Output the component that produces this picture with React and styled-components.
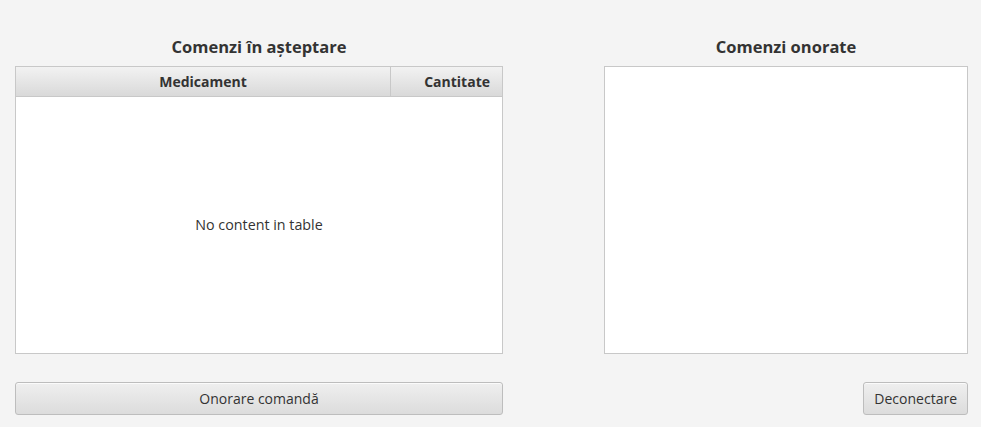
import React from "react";
import styled, { createGlobalStyle } from "styled-components";

const GlobalStyle = createGlobalStyle`
  html, body {
    margin: 0;
    padding: 0;
    background: #f4f4f4;
    font-family: "Open Sans", "Noto Sans", sans-serif;
    color: #333333;
  }
`;

const Page = styled.div`
  width: 981px;
  height: 427px;
  box-sizing: border-box;
  padding: 34px 13px 0 15px;
  display: grid;
  grid-template-columns: 488px 364px;
  justify-content: space-between;
`;

const Column = styled.div`
  display: flex;
  flex-direction: column;
  align-items: ${({ align }) => align || "stretch"};
`;

const Title = styled.h2`
  margin: 0 0 7px;
  height: 25px;
  line-height: 25px;
  align-self: stretch;
  text-align: center;
  font-size: 16.5px;
  font-weight: 700;
  color: #333333;
`;

const Frame = styled.div`
  height: 288px;
  align-self: stretch;
  box-sizing: border-box;
  border: 1px solid #c8c8c8;
  background: #ffffff;
  display: flex;
  flex-direction: column;
`;

const HeaderRow = styled.div`
  display: grid;
  grid-template-columns: 375px 1fr;
  height: 30px;
  background: linear-gradient(#f2f2f2, #d9d9d9);
  border-bottom: 1px solid #c8c8c8;
  box-sizing: border-box;
`;

const HeaderCell = styled.div`
  display: flex;
  align-items: center;
  justify-content: ${({ right }) => (right ? "flex-end" : "center")};
  padding: 0 ${({ right }) => (right ? "12px" : "0")} 0 0;
  border-right: ${({ right }) => (right ? "none" : "1px solid #c8c8c8")};
  font-size: 14px;
  font-weight: 700;
  color: #333333;
`;

const Empty = styled.div`
  flex: 1;
  display: flex;
  align-items: center;
  justify-content: center;
  padding-bottom: 2px;
  font-size: 14.3px;
  color: #333333;
`;

const Button = styled.button`
  margin-top: 28px;
  height: 33px;
  width: ${({ full }) => (full ? "100%" : "auto")};
  padding: 0 10px;
  box-sizing: border-box;
  border: 1px solid #bdbdbd;
  border-radius: 3px;
  background: linear-gradient(#efefef, #dcdcdc);
  font-family: "Open Sans", "Noto Sans", sans-serif;
  font-size: 14px;
  color: #333333;
  box-shadow: inset 0 1px 0 #fbfbfb;
`;

export default function App() {
  return (
    <>
      <GlobalStyle />
      <Page>
        <Column>
          <Title>Comenzi în așteptare</Title>
          <Frame>
            <HeaderRow>
              <HeaderCell>Medicament</HeaderCell>
              <HeaderCell right>Cantitate</HeaderCell>
            </HeaderRow>
            <Empty>No content in table</Empty>
          </Frame>
          <Button full>Onorare comandă</Button>
        </Column>
        <Column align="flex-end">
          <Title>Comenzi onorate</Title>
          <Frame />
          <Button>Deconectare</Button>
        </Column>
      </Page>
    </>
  );
}
